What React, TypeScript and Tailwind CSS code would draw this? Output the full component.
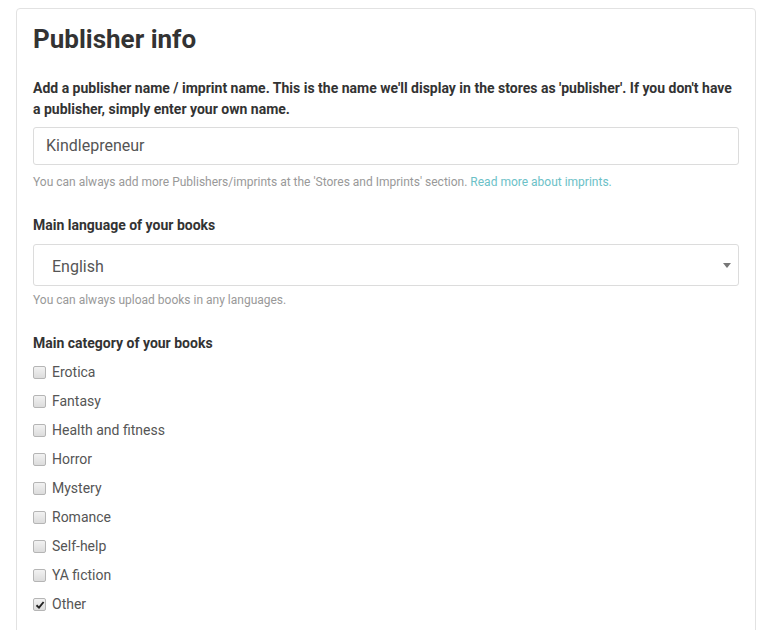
import React from "react";

const categories = [
  { name: "Erotica", checked: false },
  { name: "Fantasy", checked: false },
  { name: "Health and fitness", checked: false },
  { name: "Horror", checked: false },
  { name: "Mystery", checked: false },
  { name: "Romance", checked: false },
  { name: "Self-help", checked: false },
  { name: "YA fiction", checked: false },
  { name: "Other", checked: true },
];

function Box({ checked }: { checked: boolean }) {
  return (
    <span className="w-[13px] h-[13px] shrink-0 rounded-[2px] border border-[#b5b5b5] bg-gradient-to-b from-[#f2f2f2] to-[#dcdcdc] flex items-center justify-center">
      {checked && (
        <svg width="10" height="10" viewBox="0 0 10 10">
          <path d="M1.5 5.2 L4 7.6 L8.6 2" fill="none" stroke="#222" strokeWidth="1.9" />
        </svg>
      )}
    </span>
  );
}

export default function App() {
  return (
    <div className="w-[762px] h-[630px] overflow-hidden bg-white font-['Roboto',sans-serif] text-[#333]">
      <div className="mt-[8px] ml-[16px] w-[740px] h-[700px] border border-[#e2e2e2] rounded-[4px] px-[16px] pt-[16px]">
        <h1 className="text-[26px] leading-[29px] font-bold text-[#333]">Publisher info</h1>
        <p className="mt-[24px] text-[14px] leading-[21px] font-bold text-[#333]">
          Add a publisher name / imprint name. This is the name we'll display in the stores as 'publisher'. If you don't have a publisher, simply enter your own name.
        </p>
        <div className="mt-[7px] h-[38px] border border-[#dcdcdc] rounded-[3px] flex items-center pl-[12px] text-[16px] text-[#555]">
          Kindlepreneur
        </div>
        <p className="mt-[8px] text-[12px] leading-[18px] text-[#999]">
          You can always add more Publishers/imprints at the 'Stores and Imprints' section.{" "}
          <span className="text-[#6cc1c7]">Read more about imprints.</span>
        </p>
        <p className="mt-[24px] text-[14px] leading-[21px] font-bold text-[#333]">Main language of your books</p>
        <div className="mt-[8px] h-[42px] border border-[#dcdcdc] rounded-[3px] flex items-center justify-between pl-[18px] pr-[7px] pt-[4px] text-[16px] text-[#555]">
          <span>English</span>
          <svg width="8" height="5" viewBox="0 0 8 5" className="-mt-[4px]">
            <path d="M0 0 L8 0 L4 5 Z" fill="#777" />
          </svg>
        </div>
        <p className="mt-[5px] text-[12px] leading-[18px] text-[#999]">You can always upload books in any languages.</p>
        <p className="mt-[24px] text-[14px] leading-[21px] font-bold text-[#333]">Main category of your books</p>
        <div className="mt-[4px] flex flex-col">
          {categories.map((c) => (
            <div key={c.name} className="h-[29px] flex items-center gap-[6px] text-[14px] text-[#555]">
              <Box checked={c.checked} />
              <span>{c.name}</span>
            </div>
          ))}
        </div>
      </div>
    </div>
  );
}
